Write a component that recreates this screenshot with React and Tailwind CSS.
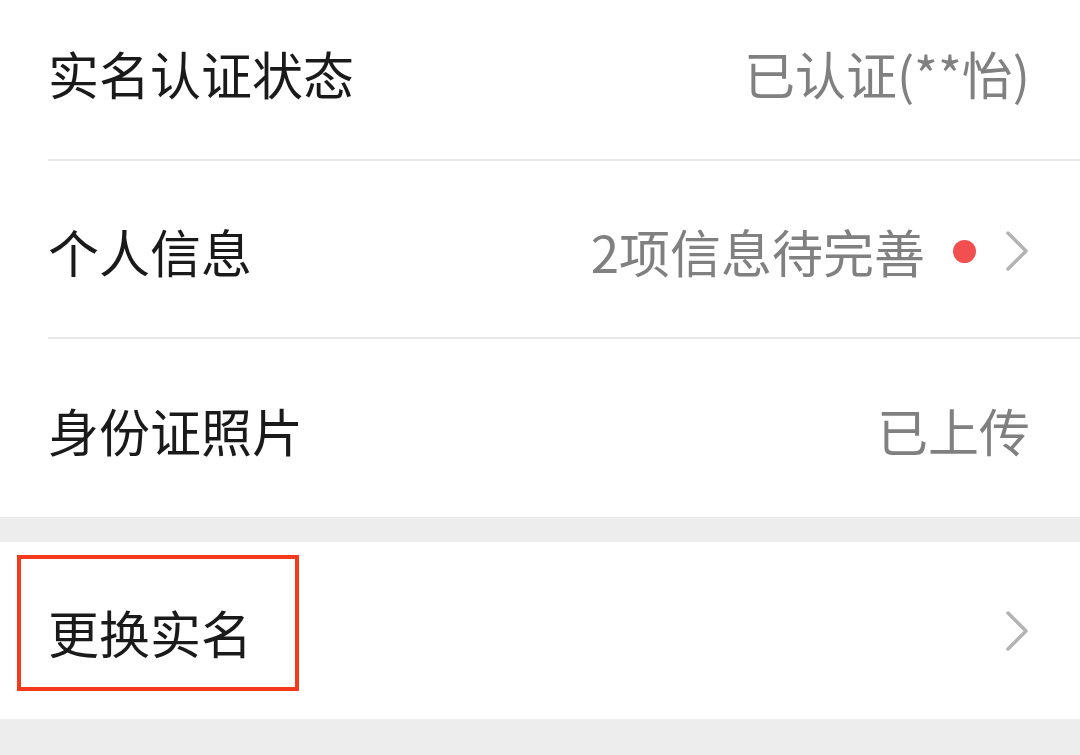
// Real-name verification settings list
const Chevron = () => (
  <svg width="26" height="42" viewBox="0 0 26 42" fill="none" className="shrink-0">
    <path d="M4 3 L22 21 L4 39" stroke="#b3b3b3" strokeWidth="3.5" strokeLinecap="round" strokeLinejoin="round" />
  </svg>
);

const Row = ({ label, children, first, last }) => (
  <div className={`pl-12 bg-white ${first ? "h-[161px]" : "h-[178px]"}`}>
    <div className={`h-full flex items-center justify-between pr-[50px] ${first ? "pb-[17px]" : ""} ${last ? "" : "border-b-2 border-[#e8e8e8]"}`}>
      <span className="text-[51px] text-[#1a1a1a] pt-1">{label}</span>
      <div className="flex items-center pt-1">{children}</div>
    </div>
  </div>
);

export default function App() {
  return (
    <div className="w-[1080px] h-[755px] bg-[#ededed] overflow-hidden relative" style={{ fontFamily: '"Noto Sans CJK SC", "Noto Sans", sans-serif' }}>
      <Row label="实名认证状态" first>
        <span className="text-[51px] text-[#808080]">已认证(**怡)</span>
      </Row>
      <Row label="个人信息">
        <span className="text-[51px] text-[#808080]">2项信息待完善</span>
        <span className="w-[23px] h-[23px] rounded-full bg-[#f25050] ml-[28px] mr-[28px]"></span>
        <Chevron />
      </Row>
      <Row label="身份证照片" last>
        <span className="text-[51px] text-[#808080]">已上传</span>
      </Row>

      <div className="h-[25px]"></div>

      <div className="pl-12 bg-white h-[177px] flex items-center justify-between pr-[50px]">
        <span className="text-[51px] text-[#1a1a1a] pt-1">更换实名</span>
        <Chevron />
      </div>

      {/* annotation box */}
      <div className="absolute left-[17px] top-[555px] w-[282px] h-[136px] border-[4px] border-[#f53a1c]"></div>
    </div>
  );
}
